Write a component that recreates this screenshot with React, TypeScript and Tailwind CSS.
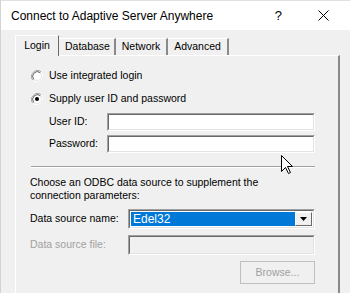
import React from "react";

function Radio({ checked }: { checked?: boolean }) {
  return (
    <svg width="12" height="12" viewBox="0 0 12 12" className="shrink-0">
      <path d="M10.2 1.8 A6 6 0 0 0 1.8 10.2" fill="none" stroke="#a0a0a0" strokeWidth="1" />
      <path d="M1.8 10.2 A6 6 0 0 0 10.2 1.8" fill="none" stroke="#ffffff" strokeWidth="1" />
      <circle cx="6" cy="6" r="4.6" fill="#ffffff" stroke="#e3e3e3" strokeWidth="0.8" />
      <path d="M9.3 2.7 A4.7 4.7 0 0 0 2.7 9.3" fill="none" stroke="#696969" strokeWidth="1" />
      {checked && <circle cx="6" cy="6" r="2" fill="#000" />}
    </svg>
  );
}

function Field({ disabled, w = "w-[209px]", h = "h-[18px]" }: { disabled?: boolean; w?: string; h?: string }) {
  return (
    <div
      className={`${w} ${h} border border-t-[#a0a0a0] border-l-[#a0a0a0] border-b-white border-r-white`}
    >
      <div
        className={`h-full w-full border border-t-[#696969] border-l-[#696969] border-b-[#e3e3e3] border-r-[#e3e3e3] ${
          disabled ? "bg-[#f0f0f0]" : "bg-white"
        }`}
      />
    </div>
  );
}

const tabs = ["Database", "Network", "Advanced"];

export default function App() {
  return (
    <div
      className="relative w-[350px] h-[293px] overflow-hidden bg-[#f0f0f0] border-l border-l-[#d4d4d4] text-[10.5px] text-black"
      style={{ fontFamily: '"Liberation Sans", Arial, sans-serif' }}
    >
      <div className="h-[30px] bg-white flex items-center pl-[10px] border-t border-t-[#e0e0e0]">
        <span className="text-[12px] text-black leading-none">Connect to Adaptive Server Anywhere</span>
        <span className="ml-auto mr-[36px] text-[13px] leading-none">?</span>
        <svg width="11" height="11" viewBox="0 0 11 11" className="mr-[21px]">
          <path d="M0.5 0.5 L10.5 10.5 M10.5 0.5 L0.5 10.5" stroke="#000" strokeWidth="1" />
        </svg>
      </div>

      <div className="pl-[14px] pt-[5px]">
        <div className="flex items-end h-[20px]">
          <div className="relative z-10 h-[21px] w-[44px] -mb-[1px] bg-[#f0f0f0] border-t border-l border-white border-r border-r-[#696969] flex items-center justify-center pb-[1px]">
            Login
          </div>
          {tabs.map((t, i) => (
            <div
              key={t}
              className={`h-[17px] flex items-center justify-center border-t border-t-white border-r-2 border-r-[#8a8a8a] ${
                i === 0 ? "w-[57px] pl-[2px]" : i === 1 ? "w-[52px]" : "w-[61px]"
              }`}
            >
              {t}
            </div>
          ))}
        </div>

        <div className="h-[260px] w-[325px] border-t border-l border-white border-r-2 border-r-[#8a8a8a] pl-[15px] pr-[23px]">
          <div className="flex items-center gap-[6px] mt-[12px] h-[16px]">
            <Radio />
            <span>Use integrated login</span>
          </div>
          <div className="flex items-center gap-[6px] mt-[7px] h-[16px]">
            <Radio checked />
            <span>Supply user ID and password</span>
          </div>

          <div className="flex items-center mt-[6px] pl-[18px]">
            <span className="w-[58px]">User ID:</span>
            <Field w="w-[210px]" />
          </div>
          <div className="flex items-center mt-[4px] pl-[18px]">
            <span className="w-[58px]">Password:</span>
            <Field w="w-[210px]" />
          </div>

          <div className="mt-[13px] h-[2px] border-t border-t-[#a0a0a0] border-b border-b-white" />

          <p className="mt-[8px] leading-[13px] -ml-px">
            Choose an ODBC data source to supplement the
            <br />
            connection parameters:
          </p>

          <div className="flex items-center mt-[7px] -ml-px">
            <span className="w-[99px]">Data source name:</span>
            <div className="w-[189px] h-[20px] border border-t-[#a0a0a0] border-l-[#a0a0a0] border-b-white border-r-white">
              <div className="h-full w-full border border-t-[#696969] border-l-[#696969] border-b-[#e3e3e3] border-r-[#e3e3e3] bg-white flex p-[1px]">
                <div className="flex-1 bg-[#0078d7] text-white text-[12px] flex items-center pl-[2px] leading-none">
                  Edel32
                </div>
                <div className="w-[17px] bg-[#f0f0f0] border border-t-white border-l-white border-b-[#696969] border-r-[#696969] flex items-center justify-center">
                  <svg width="7" height="4" viewBox="0 0 7 4">
                    <path d="M0 0 H7 L3.5 4 Z" fill="#000" />
                  </svg>
                </div>
              </div>
            </div>
          </div>

          <div className="flex items-center mt-[6px] -ml-px">
            <span className="w-[99px] text-[#a0a0a0]">Data source file:</span>
            <Field disabled w="w-[189px]" h="h-[20px]" />
          </div>

          <div className="flex justify-end mt-[6px]">
            <div className="w-[75px] h-[23px] border border-[#bfbfbf] bg-[#f0f0f0] flex items-center justify-center text-[#a0a0a0]">
              Browse...
            </div>
          </div>
        </div>
      </div>

      <svg
        width="13"
        height="20"
        viewBox="0 0 13 20"
        className="absolute left-[280px] top-[155px]"
      >
        <path
          d="M0.5 0.5 L0.5 16.5 L4.5 12.5 L7.5 18.5 L9.5 17.5 L6.5 11.5 L11.5 11.5 Z"
          fill="#fff"
          stroke="#000"
          strokeWidth="1"
        />
      </svg>
    </div>
  );
}
